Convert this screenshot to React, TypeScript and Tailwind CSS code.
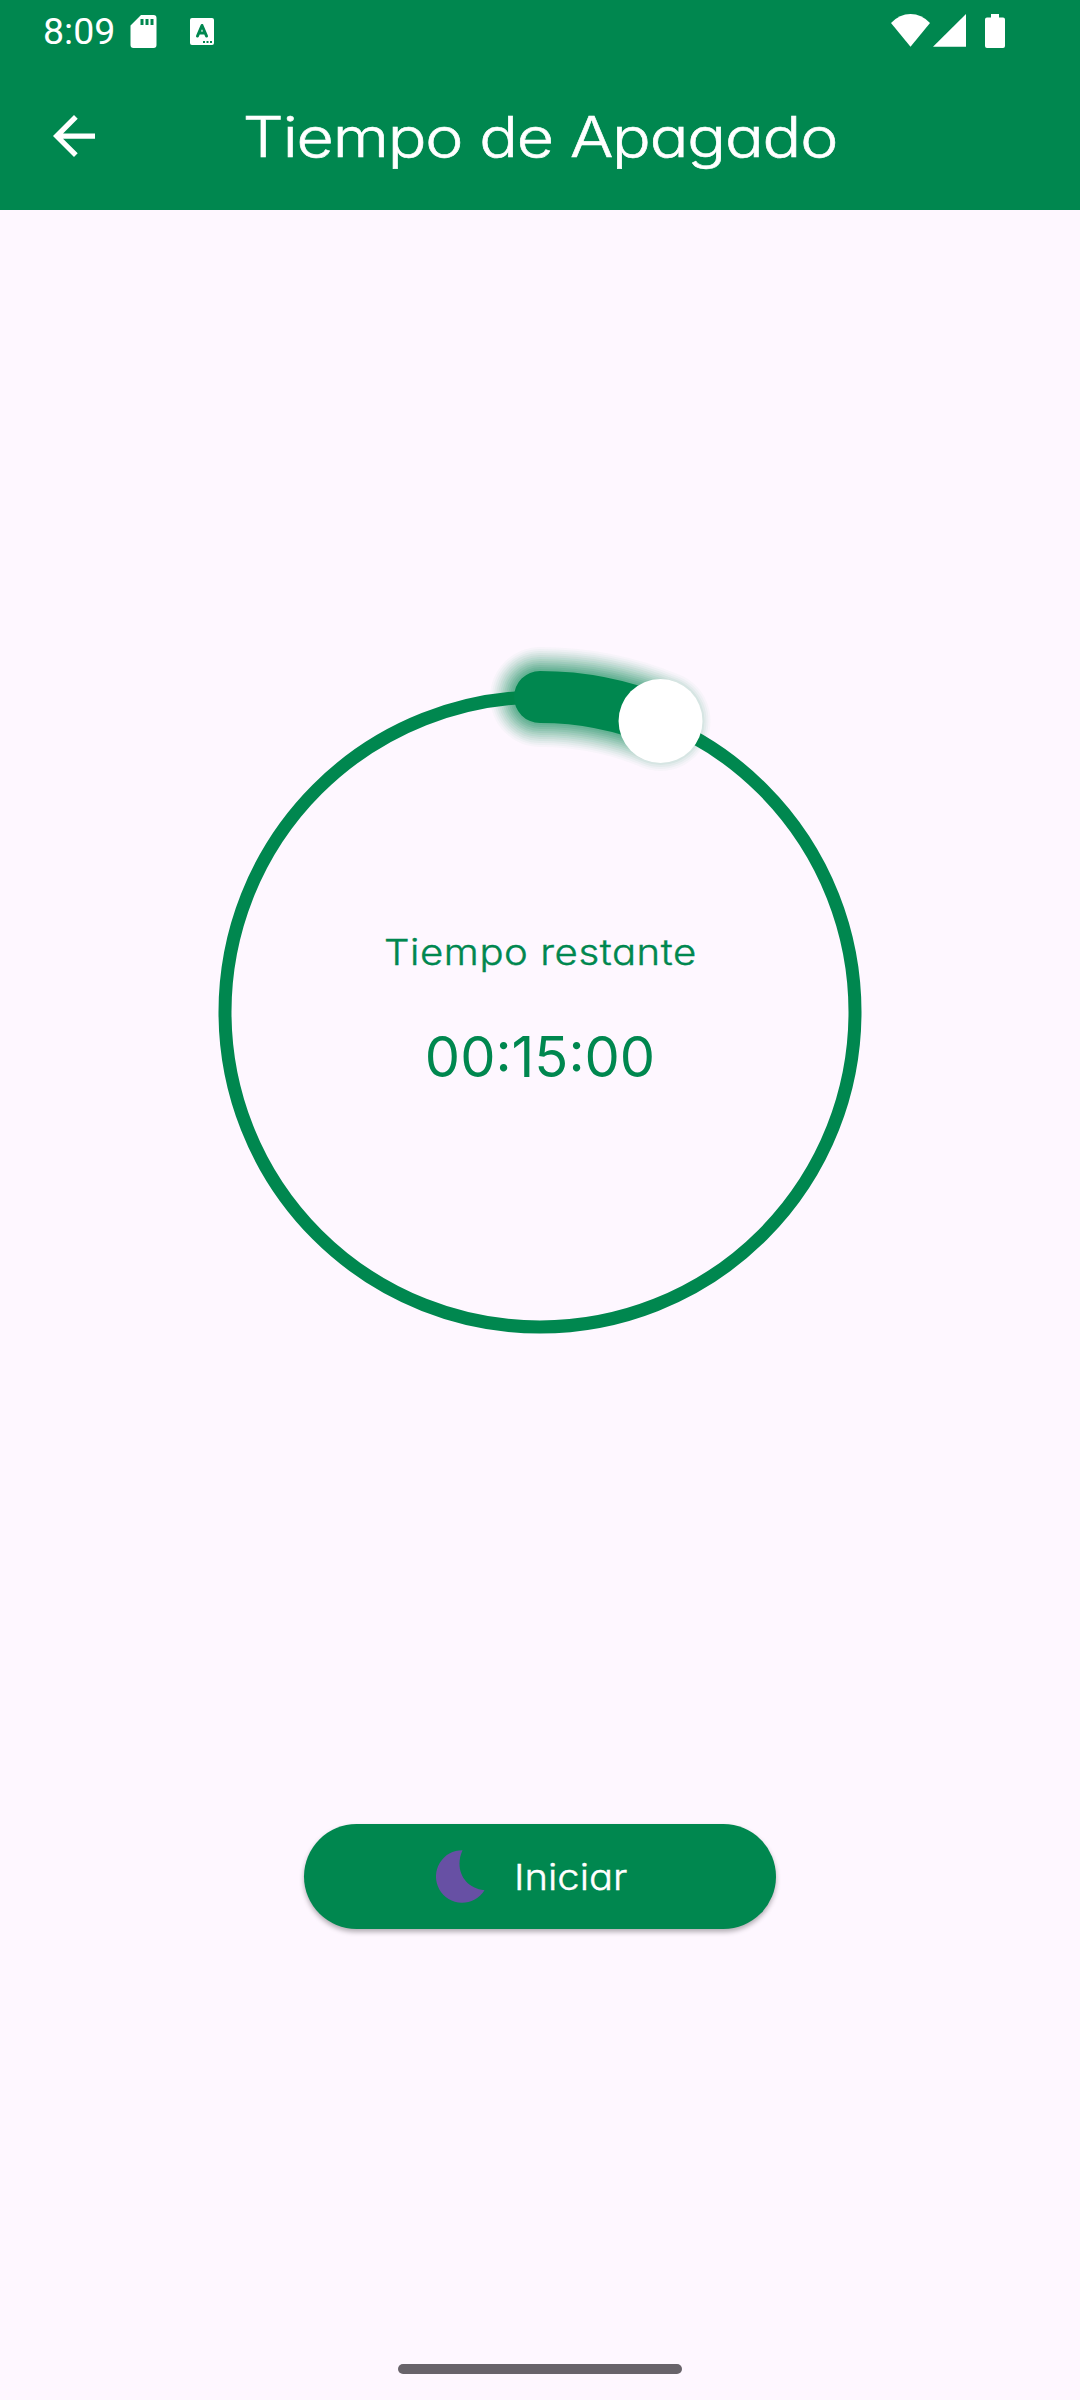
import React from "react";

const MAX_MINUTES = 240;
const RADIUS = 315;
const CENTER = 400;
const HALO_LAYERS = 12;

const StatusBar: React.FC = () => {
  return (
    <div className="flex h-16 items-start justify-between pl-[43px] pr-[75px] text-white">
      <div className="flex items-start">
        <span className="w-[87px] pt-[9px] font-['Roboto',sans-serif] text-[37.5px] leading-[44px]">
          8:09
        </span>
        <svg className="mt-[15px] h-[33px] w-[27px]" viewBox="0 0 27 33">
          <path
            fill="currentColor"
            fillRule="evenodd"
            d="M11 0H23.500Q26.500 0 26.500 3V30Q26.500 33 23.500 33H3.500Q.5 33 .5 30V10.500ZM10.500 4V10H13.500V4ZM15.500 4V10H18.500V4ZM20.500 4V10H23.500V4Z"
          />
        </svg>
        <svg className="ml-[33px] mt-[18px] h-[27px] w-6" viewBox="0 0 24 27">
          <rect width="24" height="27" rx="2" fill="currentColor" />
          <path
            d="M7.500 18L12 7.500L16.500 18M9 15H15"
            fill="none"
            stroke="#00874f"
            strokeWidth="3"
            strokeLinecap="round"
            strokeLinejoin="round"
          />
          <path d="M13 23h2v2h-2zM16.500 23h2v2h-2zM20 23h2v2h-2z" fill="#00874f" />
        </svg>
      </div>
      <div className="flex items-start pt-[14px]">
        <svg className="h-[33px] w-[39px]" viewBox="0 0 39 33">
          <path
            fill="currentColor"
            d="M0 9Q8.500 0 19.500 0T39 9L19.500 32.700Z"
          />
        </svg>
        <svg className="ml-[3px] h-[33px] w-[33px]" viewBox="0 0 33 33">
          <path fill="currentColor" d="M33 0V32.700H0Z" />
        </svg>
        <svg className="ml-[19px] h-[34px] w-5" viewBox="0 0 20 34">
          <path
            fill="currentColor"
            d="M6 0H14V3.500H18Q20 3.500 20 5.500V32Q20 34 18 34H2Q0 34 0 32V5.500Q0 3.500 2 3.500H6Z"
          />
        </svg>
      </div>
    </div>
  );
};

const AppBar: React.FC = () => {
  return (
    <header className="h-[210px] bg-[#00874f]">
      <StatusBar />
      <div className="grid h-[146px] grid-cols-[126px_1fr_126px] items-center text-white">
        <button aria-label="Volver" className="pl-[53px] pb-[3px]">
          <svg className="h-[42px] w-[42px]" viewBox="4 4 16 16">
            <path
              fill="currentColor"
              d="M20 11H7.830l5.590-5.590L12 4l-8 8 8 8 1.410-1.410L7.830 13H20v-2z"
            />
          </svg>
        </button>
        <h1 className="scale-x-[1.160] whitespace-nowrap text-center text-[55.5px] font-light leading-[80px] tracking-[-1px] [-webkit-text-stroke:0.6px_white]">
          Tiempo de Apagado
        </h1>
      </div>
    </header>
  );
};

const TimerDial: React.FC<{ minutes: number }> = ({ minutes }) => {
  const angle = (minutes / MAX_MINUTES) * 2 * Math.PI;
  const knobX = CENTER + RADIUS * Math.sin(angle);
  const knobY = CENTER - RADIUS * Math.cos(angle);
  const arc = `M${CENTER} ${CENTER - RADIUS}A${RADIUS} ${RADIUS} 0 0 1 ${knobX} ${knobY}`;
  const time = `00:${String(minutes).padStart(2, "0")}:00`;

  return (
    <div className="grid h-[800px] w-[800px] place-items-center text-[#00874f]">
      <svg
        className="col-start-1 row-start-1 h-[800px] w-[800px]"
        viewBox="0 0 800 800"
        fill="none"
        stroke="#00874f"
      >
        <circle cx={CENTER} cy={CENTER} r={RADIUS} strokeWidth="13" />
        {/* Halo: stacked translucent strokes, each wider than the last */}
        {Array.from({ length: HALO_LAYERS }, (_, i) => (
          <path
            key={i}
            d={arc}
            strokeWidth={52 + (i + 1) * 4}
            strokeLinecap="round"
            opacity={0.115 - i * 0.008}
          />
        ))}
        <path d={arc} strokeWidth="52" strokeLinecap="round" />
        <circle cx={knobX} cy={knobY} r="42" fill="white" stroke="none" />
      </svg>
      <div className="col-start-1 row-start-1 flex flex-col items-center whitespace-nowrap">
        <p className="scale-x-[1.130] text-[35.5px] font-light leading-[52px] tracking-[0.500px] [-webkit-text-stroke:0.4px_#00874f]">
          Tiempo restante
        </p>
        <p className="mt-[38px] text-[56px] font-normal leading-[80px]">{time}</p>
      </div>
    </div>
  );
};

const App: React.FC = () => {
  return (
    <div className="flex h-[2400px] w-[1080px] flex-col overflow-hidden bg-[#fef7ff] font-['Inter',sans-serif] [font-feature-settings:'cv11']">
      <AppBar />
      <main className="flex flex-1 flex-col items-center pt-[402px]">
        <TimerDial minutes={15} />
        <button className="mt-[412px] flex h-[105px] w-[472px] items-center rounded-full bg-[#00874f] pl-[132px] text-white shadow-[0_3px_5px_rgba(0,0,0,0.3)]">
          <svg className="h-[53px] w-[49px]" viewBox="0 0 49 53">
            <path
              fill="#6750a4"
              d="M26.500 .3A26.200 26.200 0 1 0 48.500 40.200C28 38 18 19 26.500 .3Z"
            />
          </svg>
          <span className="ml-[29px] origin-left scale-x-[1.110] text-[36px] font-light leading-[54px] [-webkit-text-stroke:0.4px_white]">
            Iniciar
          </span>
        </button>
      </main>
      <div className="mb-[26px] h-[10px] w-[284px] self-center rounded-full bg-[#68636a]" />
    </div>
  );
};

export default App;
